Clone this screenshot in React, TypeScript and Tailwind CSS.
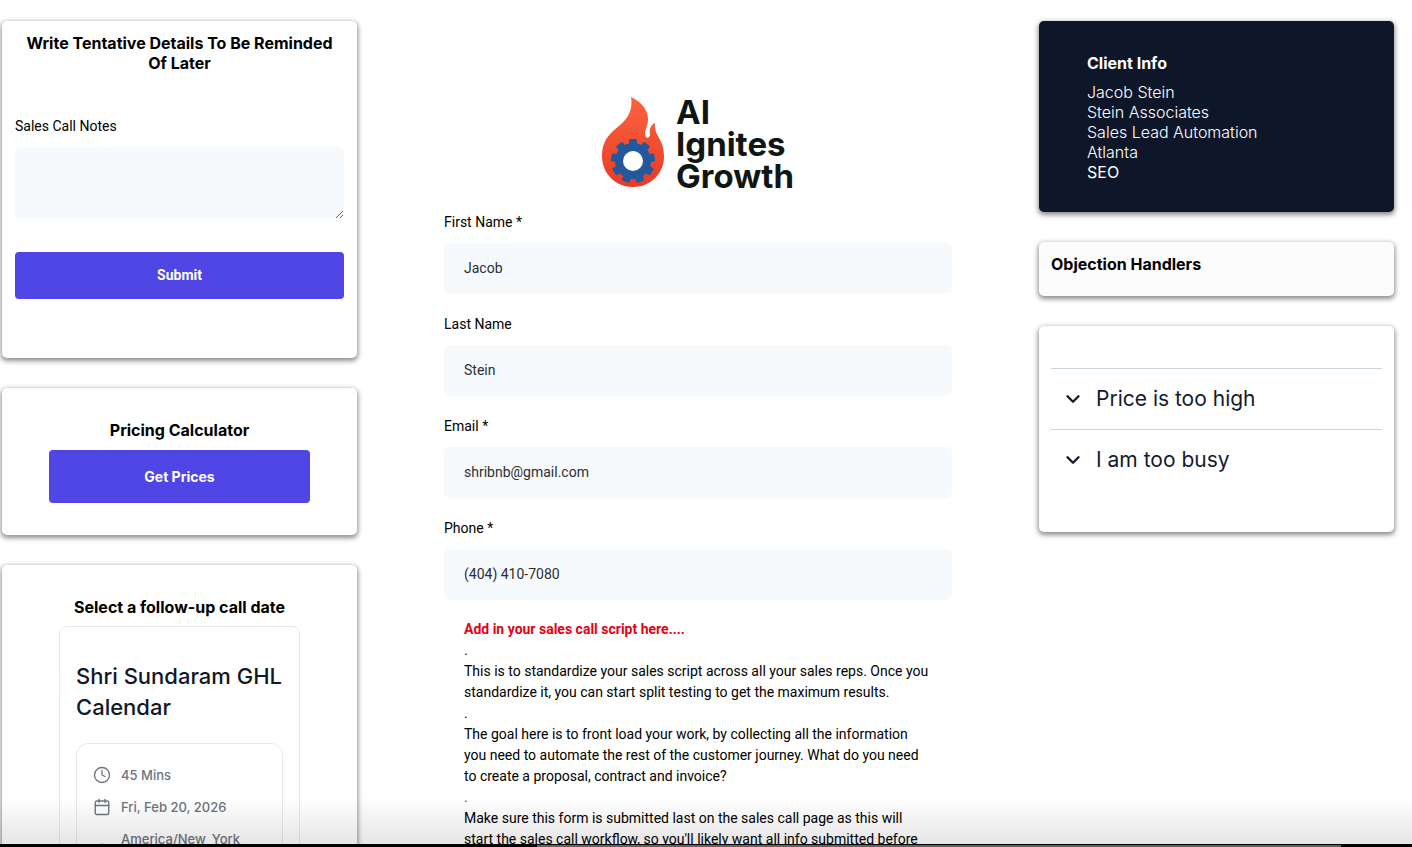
import { useState } from "react";
import type { ReactNode } from "react";
import { Calendar, ChevronDown, Clock, Globe } from "lucide-react";

const FIELDS = [
  { id: "first-name", label: "First Name *", type: "text", value: "Jacob" },
  { id: "last-name", label: "Last Name", type: "text", value: "Stein" },
  { id: "email", label: "Email *", type: "email", value: "shribnb@gmail.com" },
  { id: "phone", label: "Phone *", type: "tel", value: "(404) 410-7080" },
];

const SCRIPT = [
  "This is to standardize your sales script across all your sales reps. Once you standardize it, you can start split testing to get the maximum results.",
  "The goal here is to front load your work, by collecting all the information you need to automate the rest of the customer journey. What do you need to create a proposal, contract and invoice?",
  "Make sure this form is submitted last on the sales call page as this will start the sales call workflow, so you'll likely want all info submitted before",
];

const OBJECTIONS = [
  { title: "Price is too high", answer: "Walk through the return on investment." },
  { title: "I am too busy", answer: "Offer a shorter follow-up call." },
];

const GEAR_TEETH = [0, 40, 80, 120, 160, 200, 240, 280, 320];

const Card = ({ className, children }: { className: string; children: ReactNode }) => (
  <section
    className={`rounded-[5px] shadow-[0_2px_5px_1px_rgba(0,0,0,0.45)] ${className}`}
  >
    {children}
  </section>
);

const Logo = () => (
  <div className="flex h-[92px] justify-center gap-2.5">
    <svg width="64" height="92" viewBox="0 0 64 92" aria-hidden="true">
      <defs>
        <linearGradient id="flame" x1="0" y1="0" x2="0" y2="1">
          <stop offset="0" stopColor="#fb643f" />
          <stop offset="1" stopColor="#ea3a25" />
        </linearGradient>
      </defs>
      <path
        d="M29 1C38 5 46 13 46 23C46 30 43 33 43 38C43 43 48 43 48 38C47 33 49 29 53 27C52 32 54 37 57 42C60 47 62 53 62 61C62 78 48 91 31 91C14 91 0 78 0 60C0 50 3 43 10 36C20 27 32 20 29 1Z"
        fill="url(#flame)"
      />
      <g fill="#23589c">
        <circle cx="31" cy="65" r="18" />
        {GEAR_TEETH.map((angle) => (
          <rect
            key={angle}
            x="27"
            y="43"
            width="8"
            height="9"
            rx="1"
            transform={`rotate(${angle} 31 65)`}
          />
        ))}
      </g>
      <circle cx="31" cy="65" r="10" fill="#fff" />
    </svg>
    <p className="text-[33px] leading-8 font-bold text-[#101614]">
      AI
      <br />
      Ignites
      <br />
      Growth
    </p>
  </div>
);

const App = () => {
  const [notes, setNotes] = useState("");
  const [open, setOpen] = useState<string | null>(null);

  return (
    <div className="h-screen overflow-hidden bg-white font-['Inter',sans-serif] text-black">
      <main className="grid grid-cols-[355fr_682fr_355fr] pt-[21px] pr-[18px] pl-0.5">
        <div className="flex flex-col gap-[30px]">
          <Card className="h-[337px] bg-white px-[13px] pt-3">
            <h2 className="px-2 text-center text-base leading-5 font-bold">
              Write Tentative Details To Be Reminded Of Later
            </h2>
            <form
              className="mt-[43px] font-['Roboto',sans-serif] text-sm"
              onSubmit={(e) => e.preventDefault()}
            >
              <label htmlFor="notes" className="block leading-5">
                Sales Call Notes
              </label>
              <textarea
                id="notes"
                value={notes}
                onChange={(e) => setNotes(e.target.value)}
                className="mt-[11px] block h-[72px] w-full resize rounded-[5px] bg-[#f6fafd] px-5 py-3"
              />
              <button
                type="submit"
                className="mt-[33px] h-[47px] w-full rounded bg-[#4f46e5] pb-0.5 font-bold text-white"
              >
                Submit
              </button>
            </form>
          </Card>

          <Card className="h-[147px] bg-white px-[47px] pt-8">
            <h2 className="text-center text-base leading-5 font-bold">
              Pricing Calculator
            </h2>
            <button className="mt-2.5 h-[53px] w-full rounded bg-[#4f46e5] text-sm font-bold text-white">
              Get Prices
            </button>
          </Card>

          <Card className="bg-white px-[57px] pt-8">
            <h2 className="text-center text-base leading-5 font-bold">
              Select a follow-up call date
            </h2>
            <div className="mt-[9px] rounded-t-lg border border-[#e7e9ec] px-4 pt-[34px]">
              <h3 className="text-[22px] leading-[31px] font-medium text-[#101828]">
                Shri Sundaram GHL Calendar
              </h3>
              <ul className="mt-5 flex flex-col gap-3 rounded-t-xl border border-[#e7e9ec] px-4 pt-[21px] pb-10 text-[13px] leading-5 font-medium text-[#6f747e]">
                <li className="flex items-center gap-2.5">
                  <Clock size={18} strokeWidth={1.8} />
                  45 Mins
                </li>
                <li className="flex items-center gap-2.5">
                  <Calendar size={18} strokeWidth={1.8} />
                  Fri, Feb 20, 2026
                </li>
                <li className="flex items-start gap-2.5">
                  <Globe size={18} strokeWidth={1.8} className="mt-3.5" />
                  America/New_York
                </li>
              </ul>
            </div>
          </Card>
        </div>

        <div className="mx-auto w-full max-w-[508px] pt-[75px] font-['Roboto',sans-serif] text-sm">
          <div className="font-['Inter',sans-serif]">
            <Logo />
          </div>
          <form className="mt-6 flex flex-col gap-5" onSubmit={(e) => e.preventDefault()}>
            {FIELDS.map((field) => (
              <div key={field.id}>
                <label htmlFor={field.id} className="block leading-5">
                  {field.label}
                </label>
                <input
                  id={field.id}
                  type={field.type}
                  defaultValue={field.value}
                  className="mt-[11px] block h-[51px] w-full rounded-[5px] bg-[#f6fafd] px-5 pb-0.5 text-[#2c2e33]"
                />
              </div>
            ))}
          </form>
          <div className="px-5 pt-[19px] leading-[21px]">
            <p className="font-bold text-[#e60012]">Add in your sales call script here....</p>
            {SCRIPT.map((text, i) => (
              <div key={text}>
                <p className={i === 2 ? "text-[#e60012]" : ""}>.</p>
                <p>{text}</p>
              </div>
            ))}
          </div>
        </div>

        <div className="flex flex-col gap-[30px]">
          <Card className="h-[191px] bg-[#0e1629] px-12 pt-8 text-white">
            <h2 className="text-base leading-5 font-bold">Client Info</h2>
            <ul className="mt-[9px] text-base leading-5 font-light">
              <li>Jacob Stein</li>
              <li>Stein Associates</li>
              <li>Sales Lead Automation</li>
              <li>Atlanta</li>
              <li className="font-normal">SEO</li>
            </ul>
          </Card>

          <Card className="h-[54px] bg-[#fcfcfc] px-3 pt-3">
            <h2 className="text-base leading-5 font-bold">Objection Handlers</h2>
          </Card>

          <Card className="min-h-[206px] bg-white px-3 pt-[42px]">
            {OBJECTIONS.map((item) => (
              <div key={item.title} className="border-t border-[#cbd5e0]">
                <button
                  onClick={() => setOpen(open === item.title ? null : item.title)}
                  aria-expanded={open === item.title}
                  className="flex h-[60px] w-full items-center gap-3 px-[11px] text-[21px] text-[#131b2c]"
                >
                  <ChevronDown size={22} strokeWidth={2.6} />
                  {item.title}
                </button>
                {open === item.title && <p className="px-11 pb-4 text-sm">{item.answer}</p>}
              </div>
            ))}
          </Card>
        </div>
      </main>

      {/* bottom fade and player bar */}
      <div className="pointer-events-none fixed inset-x-0 bottom-0">
        <div className="h-12 bg-linear-to-b from-transparent to-black/10" />
        <div className="h-[3px] bg-black pt-px">
          <div className="mr-[5%] ml-[38%] h-0.5 bg-[#666263]" />
        </div>
      </div>
    </div>
  );
};

export default App;
